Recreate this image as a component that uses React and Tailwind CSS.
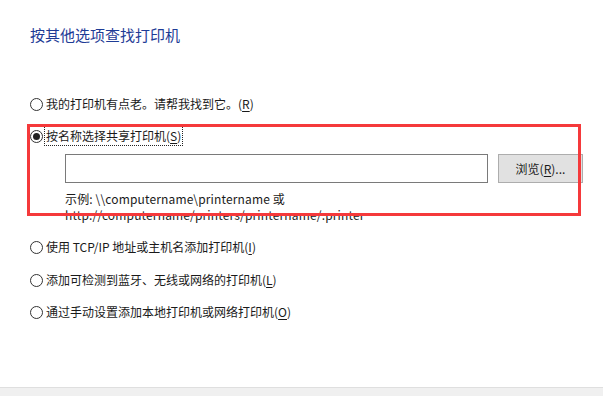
import React from 'react';

const font = { fontFamily: '"Noto Sans CJK SC", "Noto Sans", sans-serif' };

const Radio = ({ checked }) => (
  <span className="w-[13px] h-[13px] rounded-full border border-[#333] bg-white flex items-center justify-center shrink-0">
    {checked && <span className="w-[7px] h-[7px] rounded-full bg-[#222]" />}
  </span>
);

const Option = ({ label, mnemonic, checked, focused, className = '' }) => (
  <div className={`flex items-center h-[20px] ${className}`}>
    <Radio checked={checked} />
    <span
      className={`ml-[2px] px-[1px] leading-[18px] text-[12px] text-[#1a1a1a] ${
        focused ? 'outline-1 outline-dotted outline-[#222]' : ''
      }`}
    >
      {label}(<span className="underline underline-offset-2">{mnemonic}</span>)
    </span>
  </div>
);

export default function App() {
  return (
    <div className="relative w-[603px] h-[396px] bg-white flex flex-col overflow-hidden" style={font}>
      <div className="flex-1 pl-[30px]">
        <div className="mt-[26px] h-[18px] leading-[18px] text-[15px] text-[#1e3c96]">按其他选项查找打印机</div>

        <Option className="mt-[50px]" label="我的打印机有点老。请帮我找到它。" mnemonic="R" />
        <Option className="mt-[12px]" label="按名称选择共享打印机" mnemonic="S" checked focused />

        <div className="mt-[8px] flex h-[29px] pl-[35px] pr-[20px]">
          <input type="text" className="flex-1 border border-[#7a7a7a] bg-white outline-none px-1 text-[12px]" />
          <button className="ml-[10px] w-[85px] border border-[#adadad] bg-[#e1e1e1] text-[12px] text-[#1a1a1a]">
            浏览(<span className="underline underline-offset-2">R</span>)...
          </button>
        </div>

        <div className="mt-[8px] pl-[35px] text-[12px] leading-[16px] tracking-[0.15px] text-[#1a1a1a]">
          <div>示例: \\computername\printername 或</div>
          <div>http://computername/printers/printername/.printer</div>
        </div>

        <Option className="mt-[14px]" label="使用 TCP/IP 地址或主机名添加打印机" mnemonic="I" />
        <Option className="mt-[13px]" label="添加可检测到蓝牙、无线或网络的打印机" mnemonic="L" />
        <Option className="mt-[12px]" label="通过手动设置添加本地打印机或网络打印机" mnemonic="O" />
      </div>

      <div className="h-[9px] border-t border-[#dfdfdf] bg-[#f0f0f0]" />

      <div className="absolute left-[27px] top-[124px] w-[554px] h-[92px] border-[3px] border-[#f5393b] pointer-events-none" />
    </div>
  );
}
